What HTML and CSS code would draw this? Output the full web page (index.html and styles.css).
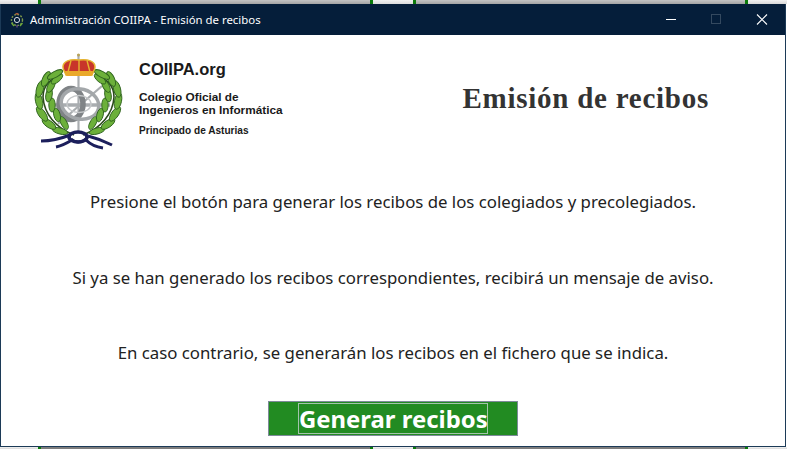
FILE: index.html
```html
<!DOCTYPE html>
<html lang="es">
<head>
<meta charset="utf-8">
<title>Emisión de recibos</title>
<link rel="stylesheet" href="styles.css">
</head>
<body>
<div class="strip strip-top">
  <span class="cell cell-light"></span><span class="cell cell-gray"></span><span class="cell cell-mid"></span><span class="cell cell-gray"></span><span class="cell cell-end"></span>
</div>
<div class="window">
  <header class="titlebar">
    <svg class="app-icon" viewBox="0 0 16 16" aria-hidden="true">
      <circle cx="8" cy="8" r="5.500" fill="none" stroke="#7f9a4a" stroke-width="1.400" stroke-dasharray="1.800 1.400"/>
      <circle cx="8" cy="8" r="2.600" fill="none" stroke="#d5dae0" stroke-width="1"/>
      <path d="M6 2.500h4L9 .8 8 1.400 7 .8z" fill="#c9663a"/>
      <path d="M2.500 11l2.500 3M13.500 11l-2.500 3" stroke="#6faa3a" stroke-width="1.300"/>
      <path d="M8 13v2.500" stroke="#6a4a8a" stroke-width="1.300"/>
    </svg>
    <span class="title-text">Administración COIIPA - Emisión de recibos</span>
    <div class="controls">
      <svg class="ctl" viewBox="0 0 46 31" aria-hidden="true"><path d="M20 15.500h10" stroke="#fff" stroke-width="1"/></svg>
      <svg class="ctl" viewBox="0 0 46 31" aria-hidden="true"><rect x="19.500" y="10.500" width="9" height="9" fill="none" stroke="#34495f" stroke-width="1"/></svg>
      <svg class="ctl" viewBox="0 0 46 31" aria-hidden="true"><path d="M19 10.500l10 10M29 10.500l-10 10" stroke="#fff" stroke-width="1.100"/></svg>
    </div>
  </header>
  <main class="content">
    <section class="head">
      <div class="brand">
        <svg class="crest" viewBox="0 0 100 105" aria-hidden="true">
          <defs>
            <g id="wreath">
              <path d="M44 85C26 78 14 64 13 47C13 37 19 29 32 25" fill="none" stroke="#2c4a1c" stroke-width="1.600"/>
              <g fill="#6cb03a" stroke="#2f641e" stroke-width="0.900">
                <ellipse cx="30" cy="81" rx="8" ry="3" transform="rotate(15 30 81)"/>
                <ellipse cx="34" cy="73" rx="7" ry="3" transform="rotate(60 34 73)"/>
                <ellipse cx="19" cy="74" rx="8" ry="3.400" transform="rotate(35 19 74)"/>
                <ellipse cx="27" cy="65" rx="7" ry="3.200" transform="rotate(75 27 65)"/>
                <ellipse cx="12" cy="64" rx="8.500" ry="3.500" transform="rotate(55 12 64)"/>
                <ellipse cx="22" cy="55" rx="7" ry="3.200" transform="rotate(90 22 55)"/>
                <ellipse cx="9" cy="51" rx="8.500" ry="3.500" transform="rotate(78 9 51)"/>
                <ellipse cx="19" cy="45" rx="7" ry="3.200" transform="rotate(100 19 45)"/>
                <ellipse cx="10" cy="39" rx="8.500" ry="3.500" transform="rotate(105 10 39)"/>
                <ellipse cx="21" cy="36" rx="7" ry="3.200" transform="rotate(-62 21 36)"/>
                <ellipse cx="16" cy="29" rx="8" ry="3.400" transform="rotate(-65 16 29)"/>
                <ellipse cx="27" cy="29" rx="7" ry="3" transform="rotate(-40 27 29)"/>
                <ellipse cx="25" cy="24.500" rx="8.500" ry="3" transform="rotate(-28 25 24.500)"/>
              </g>
            </g>
          </defs>
          <path d="M48.500 4V83" stroke="#a9adb0" stroke-width="2.200"/>
          <path d="M20 55H80" stroke="#a9adb0" stroke-width="3.500"/>
          <path d="M28 74L72 36" stroke="#a9adb0" stroke-width="2.200"/>
          <ellipse cx="41" cy="54" rx="12" ry="15.500" fill="none" stroke="#7f8386" stroke-width="5.500"/>
          <ellipse cx="50" cy="54" rx="19" ry="15" fill="none" stroke="#a3a7aa" stroke-width="3.500" transform="rotate(15 50 54)"/>
          <ellipse cx="49" cy="54" rx="12" ry="8.500" fill="none" stroke="#c4c7c9" stroke-width="1.500"/>
          <use href="#wreath"/>
          <use href="#wreath" transform="matrix(-1 0 0 1 97 0)"/>
          <path d="M33 17C33 11 40 9 49 10C58 9 65 11 65 17C65 20 63 22 62 25H36C35 22 33 20 33 17Z" fill="#c8352a" stroke="#e5b42e" stroke-width="1.500"/>
          <path d="M49 10V22M41 10.500L38 22M57 10.500L60 22" fill="none" stroke="#e5b42e" stroke-width="1.400"/>
          <path d="M35 21H63L61.500 26H36.500Z" fill="#eaa92a"/>
          <circle cx="48.500" cy="5" r="1.500" fill="#b9a45a"/>
          <path d="M11 91C20 91 30 89 40 85M26 97C32 96 37 93 42 90M58 86C66 88 74 91 82 95M56 90C60 94 66 97 73 98" fill="none" stroke="#1c1f5c" stroke-width="3"/>
          <ellipse cx="48" cy="87" rx="9" ry="5" fill="none" stroke="#1c1f5c" stroke-width="3.600"/>
          <path d="M41 89C45 93 52 93 56 89" fill="none" stroke="#1c1f5c" stroke-width="3"/>
        </svg>
        <div class="brand-text">
          <div class="org">COIIPA.org</div>
          <div class="college">Colegio Oficial de<br>Ingenieros en Informática</div>
          <div class="region">Principado de Asturias</div>
        </div>
      </div>
      <h1 class="page-title">Emisión de recibos</h1>
    </section>
    <section class="messages">
      <p>Presione el botón para generar los recibos de los colegiados y precolegiados.</p>
      <p>Si ya se han generado los recibos correspondientes, recibirá un mensaje de aviso.</p>
      <p>En caso contrario, se generarán los recibos en el fichero que se indica.</p>
    </section>
    <div class="action">
      <button class="generate" type="button"><span class="focus">Generar recibos</span></button>
    </div>
  </main>
</div>
<div class="strip strip-bottom">
  <span class="cell cell-light"></span><span class="cell cell-gray"></span><span class="cell cell-mid"></span><span class="cell cell-gray"></span><span class="cell cell-end"></span>
</div>
</body>
</html>
```
FILE: styles.css
```css
html, body { margin: 0; padding: 0; height: 100%; }
body {
  width: 787px;
  height: 449px;
  overflow: hidden;
  display: flex;
  flex-direction: column;
  background: #fff;
  font-family: "Noto Sans", sans-serif;
}
.strip { display: flex; flex: none; }
.strip-top { height: 4px; }
.strip-bottom { height: 2px; }
.cell { display: block; height: 100%; box-sizing: border-box; }
.cell-light { width: 41px; background: linear-gradient(#f2f2f2, #d8d8d8); border-right: 3px solid #0b7a0b; }
.cell-gray { width: 332px; background: linear-gradient(#c4c4c4, #a4a4a4); border-right: 3px solid #0b7a0b; }
.cell-mid { width: 43px; background: linear-gradient(#f2f2f2, #dcdcdc); border-right: 3px solid #0b7a0b; }
.cell-end { flex: 1; background: linear-gradient(#f2f2f2, #d8d8d8); }
.strip-bottom .cell-gray { background: #7d7d7d; }

.window {
  flex: 1;
  min-height: 0;
  display: flex;
  flex-direction: column;
  margin-right: 1px;
  border: 1px solid #1c3a57;
  border-top: 0;
  background: #fff;
}
.titlebar {
  flex: none;
  height: 31px;
  display: flex;
  align-items: center;
  background: #051e3a;
  color: #fff;
  font-size: 11.400px;
}
.app-icon { width: 16px; height: 16px; margin-left: 8px; margin-right: 5px; }
.title-text { flex: 1; white-space: nowrap; }
.controls { display: flex; margin-right: 1px; }
.ctl { width: 46px; height: 31px; display: block; }

.content { flex: 1; display: flex; flex-direction: column; min-height: 0; color: #222; }
.head { display: flex; justify-content: space-between; align-items: flex-start; flex: none; height: 135px; }
.brand { display: flex; margin-left: 29px; padding-top: 15px; }
.crest { width: 100px; height: 105px; display: block; flex: none; }
.brand-text { margin-left: 9px; padding-top: 9px; font-family: "Liberation Sans", sans-serif; font-weight: 700; color: #1a1a1a; }
.org { font-size: 16.500px; line-height: 20px; }
.college { font-size: 11.800px; line-height: 13px; margin-top: 12px; }
.region { font-size: 10.100px; line-height: 12px; margin-top: 8px; }
.page-title {
  margin: 45px 76px 0 0;
  font-family: "Liberation Serif", serif;
  font-size: 29px;
  line-height: 36px;
  font-weight: 700;
  color: #333;
  letter-spacing: 0.750px;
}
.messages { display: flex; flex-direction: column; gap: 51.500px; margin-top: 20px; flex: none; }
.messages p { margin: 0; text-align: center; font-size: 16.800px; line-height: 24px; color: #222; }
.action { display: flex; justify-content: center; margin-top: 36px; }
.generate {
  width: 250px;
  height: 35px;
  padding: 0;
  display: flex;
  align-items: center;
  justify-content: center;
  background: #228b22;
  border: 1px solid #7d8a99;
  color: #fff;
  font-family: "Noto Sans", sans-serif;
  font-weight: 700;
  font-size: 23.900px;
}
.focus { display: block; width: 188px; height: 29px; line-height: 29px; border: 1px solid #a4c4ac; white-space: nowrap; text-align: center; }
```
